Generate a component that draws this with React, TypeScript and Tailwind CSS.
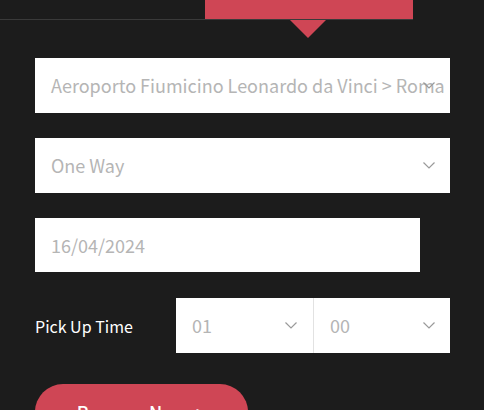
import React from "react";

const Chevron = () => (
  <svg width="12" height="7" viewBox="0 0 12 7" fill="none" className="shrink-0">
    <path d="M0.5 0.5 L6 6 L11.5 0.5" stroke="#9a9a9a" strokeWidth="1.2" />
  </svg>
);

export default function App() {
  const font = { fontFamily: '"Noto Sans CJK SC", "Source Sans Pro", sans-serif' };
  return (
    <div className="w-[484px] h-[410px] overflow-hidden bg-[#1c1c1c] relative" style={font}>
      <div className="h-[20px] relative border-b border-[#3a3a3a] w-[413px]">
        <div className="absolute left-[205px] top-0 w-[208px] h-[19px] bg-[#cf4655]" />
      </div>
      <div
        className="absolute left-[290px] top-[20px] w-0 h-0 border-l-[18px] border-r-[18px] border-t-[18px] border-l-transparent border-r-transparent border-t-[#cf4655]"
      />
      <div className="pl-[35px] pr-[34px] pt-[38px] flex flex-col">
        <div className="h-[55px] bg-white relative flex items-center pl-[16px] overflow-hidden">
          <span className="text-[18px] text-[#b5b5b5] whitespace-nowrap">Aeroporto Fiumicino Leonardo da Vinci &gt; Roma</span>
          <div className="absolute right-[15px] top-[24px]"><Chevron /></div>
        </div>
        <div className="h-[55px] mt-[25px] bg-white flex items-center justify-between pl-[16px] pr-[15px]">
          <span className="text-[18px] text-[#b5b5b5]">One Way</span>
          <Chevron />
        </div>
        <div className="h-[54px] mt-[25px] w-[385px] bg-white flex items-center pl-[16px]">
          <span className="text-[18px] text-[#b5b5b5]">16/04/2024</span>
        </div>
        <div className="mt-[26px] flex items-center">
          <span className="w-[141px] text-[16px] font-normal text-white">Pick Up Time</span>
          <div className="flex-1 h-[55px] bg-white flex">
            <div className="flex-1 flex items-center justify-between pl-[16px] pr-[16px] border-r border-[#e2e2e2]">
              <span className="text-[18px] text-[#b5b5b5]">01</span>
              <Chevron />
            </div>
            <div className="flex-1 flex items-center justify-between pl-[16px] pr-[15px]">
              <span className="text-[18px] text-[#b5b5b5]">00</span>
              <Chevron />
            </div>
          </div>
        </div>
        <div className="mt-[31px]">
          <button className="w-[213px] h-[56px] rounded-full bg-[#cf4655] text-white text-[18px] font-medium flex items-center justify-center gap-2">
            Reserve Now <span>&gt;</span>
          </button>
        </div>
      </div>
    </div>
  );
}
